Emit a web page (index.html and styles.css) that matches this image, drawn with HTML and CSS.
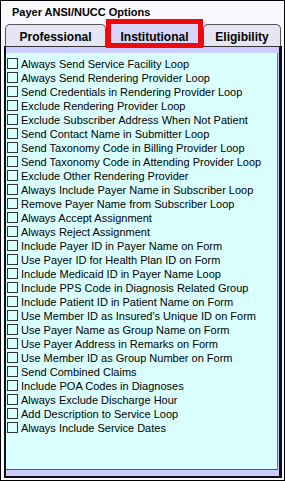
FILE: index.html
```html
<!DOCTYPE html>
<html>
<head>
<meta charset="utf-8">
<link rel="stylesheet" href="styles.css">
</head>
<body>
<div class="title">Payer ANSI/NUCC Options</div>
<div class="tabs">
  <div class="tab tab-pro">Professional</div>
  <div class="tab tab-inst selected">Institutional</div>
  <div class="tab tab-elig">Eligibility</div>
</div>
<div class="panel">
  <div class="list">
    <label class="row"><input type="checkbox" class="cb"><span>Always Send Service Facility Loop</span></label>
    <label class="row"><input type="checkbox" class="cb"><span>Always Send Rendering Provider Loop</span></label>
    <label class="row"><input type="checkbox" class="cb"><span>Send Credentials in Rendering Provider Loop</span></label>
    <label class="row"><input type="checkbox" class="cb"><span>Exclude Rendering Provider Loop</span></label>
    <label class="row"><input type="checkbox" class="cb"><span>Exclude Subscriber Address When Not Patient</span></label>
    <label class="row"><input type="checkbox" class="cb"><span>Send Contact Name in Submitter Loop</span></label>
    <label class="row"><input type="checkbox" class="cb"><span>Send Taxonomy Code in Billing Provider Loop</span></label>
    <label class="row"><input type="checkbox" class="cb"><span>Send Taxonomy Code in Attending Provider Loop</span></label>
    <label class="row"><input type="checkbox" class="cb"><span>Exclude Other Rendering Provider</span></label>
    <label class="row"><input type="checkbox" class="cb"><span>Always Include Payer Name in Subscriber Loop</span></label>
    <label class="row"><input type="checkbox" class="cb"><span>Remove Payer Name from Subscriber Loop</span></label>
    <label class="row"><input type="checkbox" class="cb"><span>Always Accept Assignment</span></label>
    <label class="row"><input type="checkbox" class="cb"><span>Always Reject Assignment</span></label>
    <label class="row"><input type="checkbox" class="cb"><span>Include Payer ID in Payer Name on Form</span></label>
    <label class="row"><input type="checkbox" class="cb"><span>Use Payer ID for Health Plan ID on Form</span></label>
    <label class="row"><input type="checkbox" class="cb"><span>Include Medicaid ID in Payer Name Loop</span></label>
    <label class="row"><input type="checkbox" class="cb"><span>Include PPS Code in Diagnosis Related Group</span></label>
    <label class="row"><input type="checkbox" class="cb"><span>Include Patient ID in Patient Name on Form</span></label>
    <label class="row"><input type="checkbox" class="cb"><span>Use Member ID as Insured's Unique ID on Form</span></label>
    <label class="row"><input type="checkbox" class="cb"><span>Use Payer Name as Group Name on Form</span></label>
    <label class="row"><input type="checkbox" class="cb"><span>Use Payer Address in Remarks on Form</span></label>
    <label class="row"><input type="checkbox" class="cb"><span>Use Member ID as Group Number on Form</span></label>
    <label class="row"><input type="checkbox" class="cb"><span>Send Combined Claims</span></label>
    <label class="row"><input type="checkbox" class="cb"><span>Include POA Codes in Diagnoses</span></label>
    <label class="row"><input type="checkbox" class="cb"><span>Always Exclude Discharge Hour</span></label>
    <label class="row"><input type="checkbox" class="cb"><span>Add Description to Service Loop</span></label>
    <label class="row"><input type="checkbox" class="cb"><span>Always Include Service Dates</span></label>
  </div>
</div>
</body>
</html>
```
FILE: styles.css
```css
html, body {
  margin: 0;
  padding: 0;
}
html {
  background: #f8f8ff;
}
body {
  box-sizing: border-box;
  width: 285px;
  height: 481px;
  border: 1px solid #000;
  background: #f8f8ff;
  font-family: "Liberation Sans", Arial, sans-serif;
  color: #000;
  display: flex;
  flex-direction: column;
  overflow: hidden;
}
.title {
  font-size: 11px;
  font-weight: bold;
  line-height: 13px;
  padding: 5px 0 0 11px;
  height: 13px;
}
.tabs {
  position: relative;
  z-index: 1;
  display: flex;
  align-items: flex-start;
  height: 27px;
  padding-left: 4px;
}
.tab {
  box-sizing: border-box;
  margin-top: 5px;
  height: 22px;
  border: 1px solid #555;
  border-bottom: none;
  border-radius: 5px 5px 0 0;
  background: #e6e6f2;
  font-size: 12px;
  font-weight: bold;
  line-height: 14px;
  padding-top: 5px;
  text-align: center;
}
.tab-pro {
  width: 101px;
}
.tab-elig {
  width: 78px;
}
.tab-inst {
  width: 97px;
}
.selected {
  margin-top: 0;
  height: 29px;
  border: 5px solid #ee0a0a;
  border-radius: 0;
  background: #d6d6fb;
  padding-top: 6px;
}
.panel {
  flex: 1;
  display: flex;
  flex-direction: column;
  margin: 0 2px 2px 3px;
  border-top: 1px solid #333;
  border-left: 2px solid #111;
  border-right: 3px solid #111;
  border-bottom: 2px solid #111;
  background: #ccccff;
  padding: 6px 1px 6px 0;
}
.list {
  flex: 1;
  background: #d9ffff;
  border-right: 1px solid #777;
  border-bottom: 1px solid #555;
  padding: 4px 0 0 1px;
}
.row {
  display: flex;
  align-items: flex-start;
  height: 14px;
  font-size: 11px;
  line-height: 14px;
  white-space: nowrap;
}
.cb {
  -webkit-appearance: none;
  appearance: none;
  box-sizing: border-box;
  width: 11px;
  height: 11px;
  margin: 1px 3px 0 0;
  border: 1px solid #333;
  background: #d9ffff;
  flex: none;
}
```
